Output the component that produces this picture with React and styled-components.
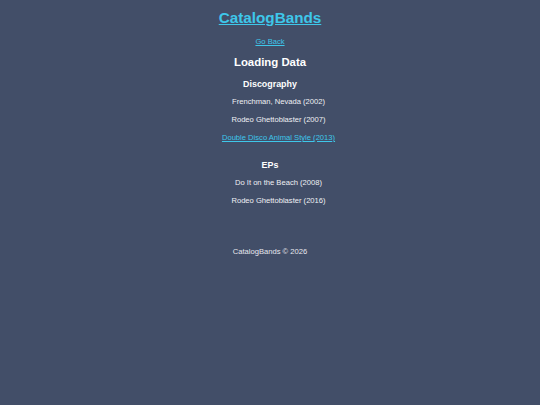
import React from "react";
import styled, { createGlobalStyle } from "styled-components";

const GlobalStyle = createGlobalStyle`
  html, body {
    margin: 0;
    padding: 0;
    background: #424e68;
  }
  body {
    font-family: "Liberation Sans", Arial, sans-serif;
    color: #f2f2f5;
    min-height: 405px;
  }
`;

const Page = styled.div`
  display: flex;
  flex-direction: column;
  align-items: center;
  text-align: center;
  min-height: 405px;
`;

const Title = styled.a`
  margin-top: 8px;
  font-size: 15.25px;
  line-height: 20px;
  font-weight: bold;
  color: #3ec7ea;
  text-decoration: underline;
`;

const Link = styled.a`
  font-size: 7.6px;
  line-height: 10px;
  color: #3ec7ea;
  text-decoration: underline;
  margin-top: ${(p) => p.$top || 0}px;
`;

const Heading = styled.div`
  font-weight: bold;
  color: #ffffff;
  font-size: ${(p) => p.$size}px;
  line-height: ${(p) => p.$lh}px;
  margin-top: ${(p) => p.$top}px;
`;

const List = styled.div`
  display: flex;
  flex-direction: column;
  align-items: center;
  gap: 8px;
  padding-left: 17px;
  margin-top: ${(p) => p.$top}px;
`;

const Item = styled.div`
  font-size: 7.6px;
  line-height: 10px;
  color: #f0f0f4;
`;

const Footer = styled.div`
  margin-top: 41px;
  font-size: 7.6px;
  line-height: 10px;
  color: #e6e7ee;
`;

export default function App() {
  return (
    <>
      <GlobalStyle />
      <Page>
        <Title href="#">CatalogBands</Title>
        <Link href="#" $top={9}>Go Back</Link>
        <Heading $size={11.4} $lh={14} $top={8}>Loading Data</Heading>
        <Heading $size={8.9} $lh={12} $top={9}>Discography</Heading>
        <List $top={7}>
          <Item>Frenchman, Nevada (2002)</Item>
          <Item>Rodeo Ghettoblaster (2007)</Item>
          <Link href="#">Double Disco Animal Style (2013)</Link>
        </List>
        <Heading $size={8.9} $lh={12} $top={16}>EPs</Heading>
        <List $top={7}>
          <Item>Do It on the Beach (2008)</Item>
          <Item>Rodeo Ghettoblaster (2016)</Item>
        </List>
        <Footer>CatalogBands © 2026</Footer>
      </Page>
    </>
  );
}
